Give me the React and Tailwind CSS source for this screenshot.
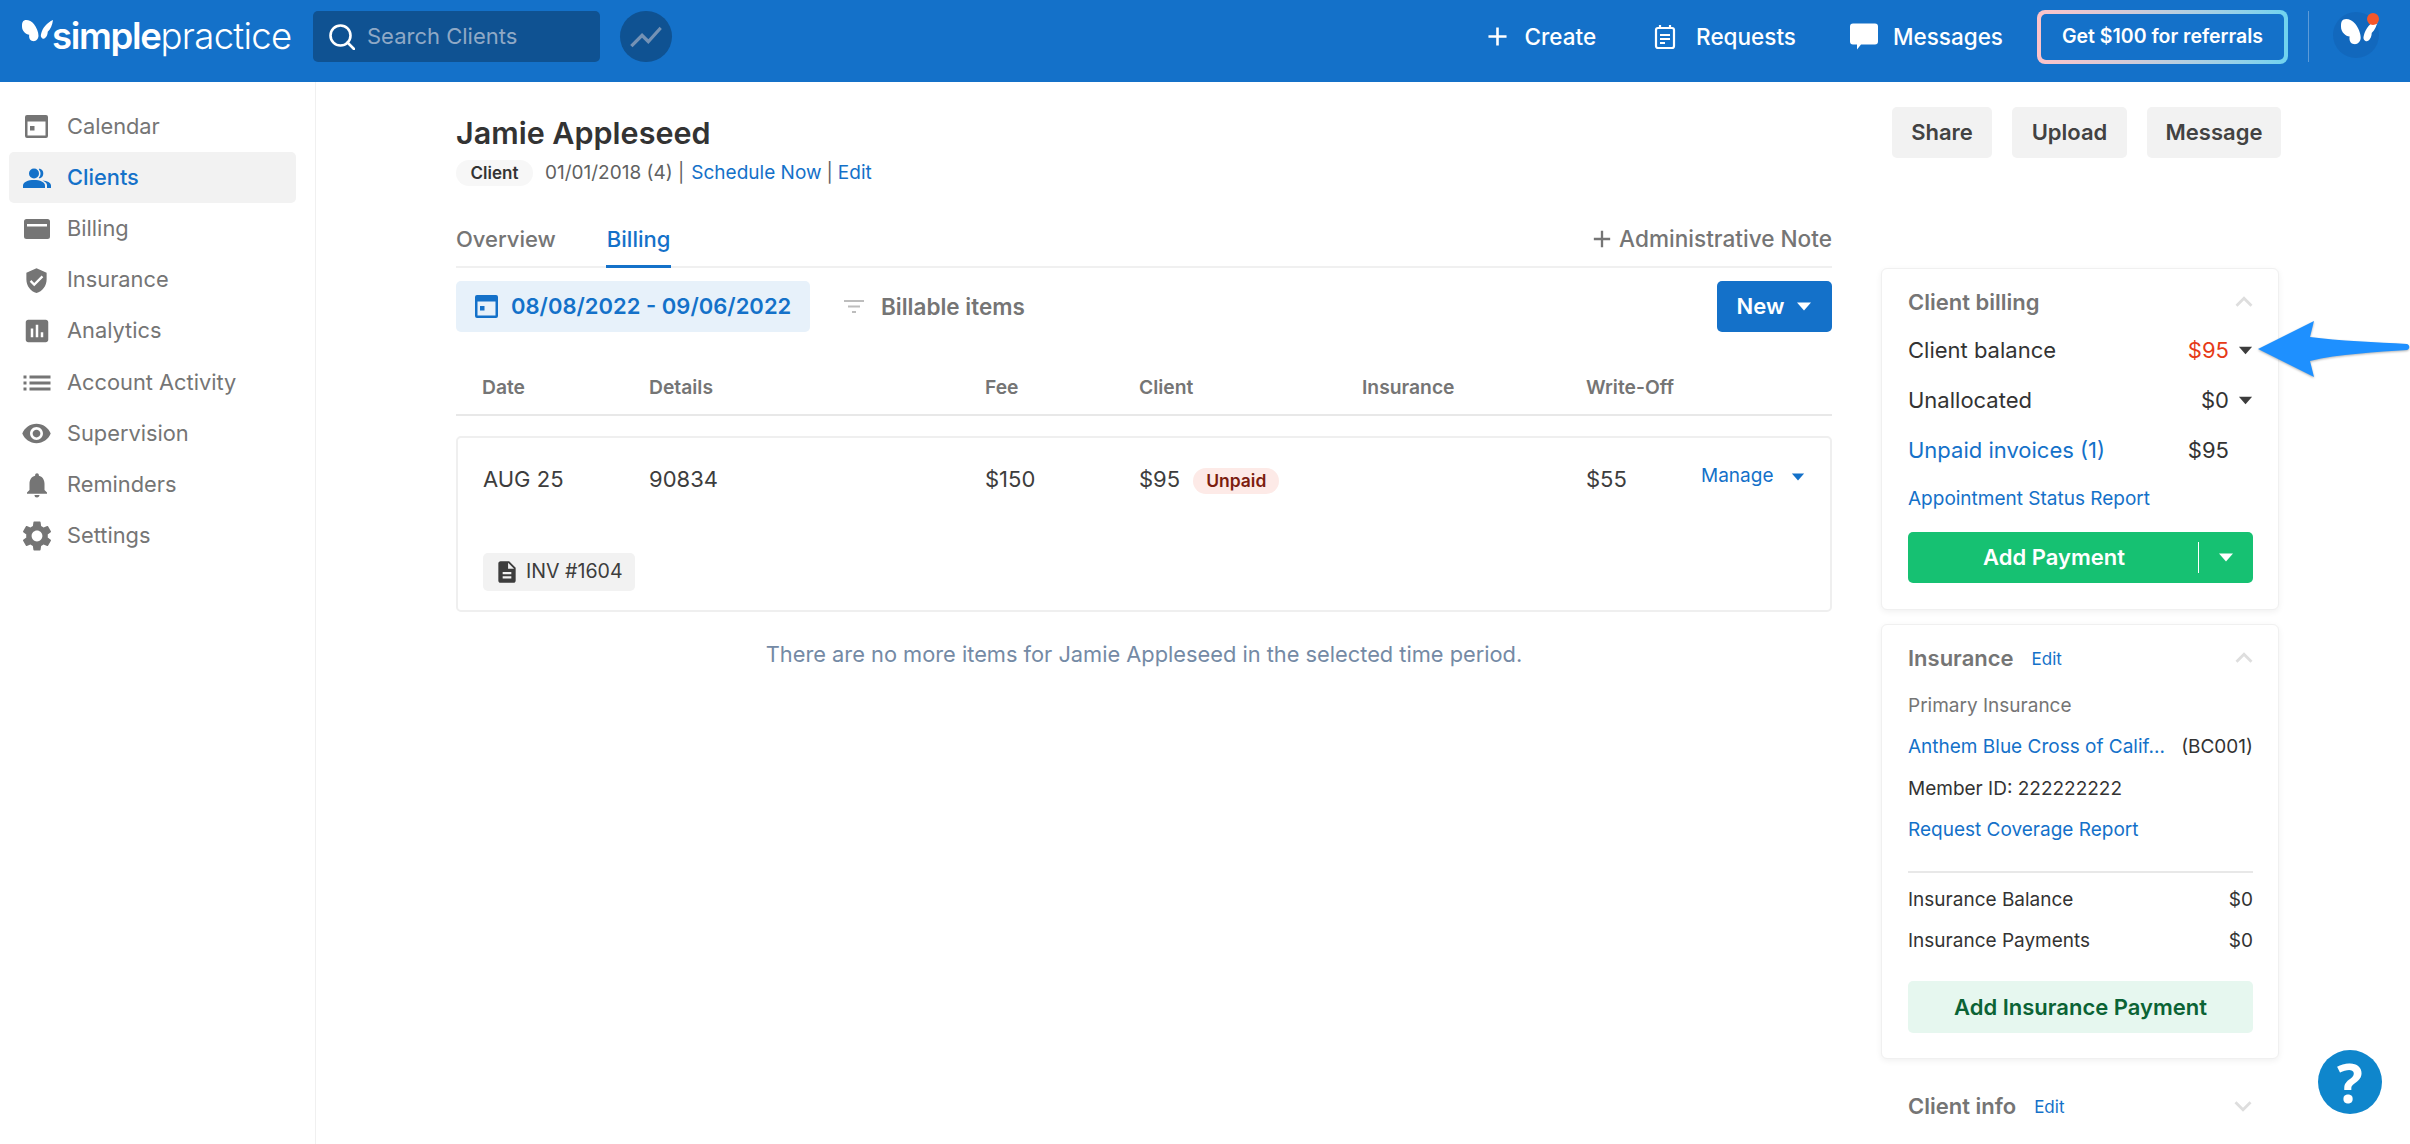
import { MdAdd, MdAssessment, MdDescription, MdExpandLess, MdExpandMore, MdList, MdNotifications, MdSettings, MdShowChart, MdVerifiedUser, MdVisibility } from 'react-icons/md';

const CalendarIcon = ({ className }) => (
    <svg viewBox="0 0 23 23" className={className} fill="currentColor">
        <path fillRule="evenodd" d="M2 0h19a2 2 0 0 1 2 2v19a2 2 0 0 1-2 2H2a2 2 0 0 1-2-2V2a2 2 0 0 1 2-2zm.500 6.500v14h18v-14h-18zM5 11h4.500v4.500H5V11z" />
    </svg>
);

const PeopleIcon = ({ className }) => (
    <svg viewBox="0 0 28 20" className={className} fill="currentColor">
        <circle cx="11" cy="5.500" r="5" />
        <path d="M17 .8a5 5 0 0 1 0 9.400c-.8.300-1.500 0-1-.6a7 7 0 0 0 0-8.200c-.5-.6.200-.9 1-.6z" />
        <path d="M0 20v-2.500C0 14 5 12 11 12s11 2 11 5.500V20H0z" />
        <path d="M19.500 12.500c4.500.4 8.500 2 8.500 5V20h-4v-3c0-1.800-2-3.400-4.500-4.500z" />
    </svg>
);

const CardIcon = ({ className }) => (
    <svg viewBox="0 0 26 20" className={className} fill="currentColor">
        <path fillRule="evenodd" d="M2.500 0h21A2.500 2.500 0 0 1 26 2.500v15a2.500 2.500 0 0 1-2.500 2.500h-21A2.500 2.500 0 0 1 0 17.500v-15A2.500 2.500 0 0 1 2.500 0zM3 5v2.500h20V5H3z" />
    </svg>
);

const RequestsIcon = ({ className }) => (
    <svg viewBox="0 0 22 26" className={className} fill="none" stroke="currentColor" strokeWidth="2.200">
        <rect x="2" y="4" width="18" height="20" rx="2" />
        <path d="M6 1v4M16 1v4" />
        <path d="M6 11h10M6 15h10M6 19h5" />
    </svg>
);

const SearchIcon = ({ className }) => (
    <svg viewBox="0 0 26 26" className={className} fill="none" stroke="currentColor" strokeWidth="2.600" strokeLinecap="round">
        <circle cx="11.500" cy="11.500" r="10" />
        <path d="M18.500 18.500L25 25" />
    </svg>
);

const Butterfly = ({ className }) => (
    <svg viewBox="0 0 94 68" className={className} fill="currentColor">
        <path d="M2 8C8 -2 26 2 36 14C44 24 50 38 50 50C50 60 42 68 32 66C24 65 20 56 22 47C12 46 0 36 0 22C0 16 0 12 2 8Z" />
        <path d="M58 44C62 26 76 10 94 2C92 18 86 30 78 38C78 50 70 62 62 58C57 55 56 50 58 44Z" />
    </svg>
);

const Caret = ({ className }) => (
    <svg viewBox="0 0 16 9" className={className} fill="currentColor">
        <path d="M1 0.500h14L8 8.500z" />
    </svg>
);

const navItems = [
    { label: 'Calendar', icon: <CalendarIcon className="w-[23px] h-[23px]" /> },
    { label: 'Clients', icon: <PeopleIcon className="w-[28px] h-[20px]" />, active: true },
    { label: 'Billing', icon: <CardIcon className="w-[26px] h-[20px]" /> },
    { label: 'Insurance', icon: <MdVerifiedUser className="w-[27px] h-[27px] shrink-0" /> },
    { label: 'Analytics', icon: <MdAssessment className="w-[30px] h-[30px] shrink-0" /> },
    { label: 'Account Activity', icon: <MdList className="w-[36px] h-[36px] shrink-0" /> },
    { label: 'Supervision', icon: <MdVisibility className="w-[31px] h-[31px] shrink-0" /> },
    { label: 'Reminders', icon: <MdNotifications className="w-[30px] h-[30px] shrink-0" /> },
    { label: 'Settings', icon: <MdSettings className="w-[36px] h-[36px] shrink-0" /> },
];

const Sidebar = () => (
    <aside className="w-[316px] shrink-0 border-r border-[#f0f0f0] pt-[19px] pl-[9px] pr-[19px]">
        {navItems.map((item) => (
            <div
                key={item.label}
                className={`h-[51.200px] flex items-center rounded-[5px] ${item.active ? 'bg-[#f2f2f2] text-[#1471c9] font-medium' : 'text-[#757575]'}`}
            >
                <span className="w-[58px] shrink-0 flex justify-center pr-[3px]">{item.icon}</span>
                <span className="text-[21.800px] leading-none">{item.label}</span>
            </div>
        ))}
    </aside>
);

const Header = () => (
    <header className="h-[82px] pb-[9px] bg-[#1471c9] flex items-center text-white">
        <div className="w-[313px] shrink-0 flex items-center pl-[22px]">
            <Butterfly className="w-[31px] h-[23px] -mt-[13px] shrink-0" />
            <span className="text-[36.500px] leading-none font-semibold tracking-[-1.300px] -ml-[1px]">simple</span>
            <span className="text-[36.500px] leading-none font-light tracking-[-0.700px]">practice</span>
        </div>
        <div className="w-[287px] h-[51px] rounded-[5px] bg-[#0f5292] flex items-center pl-[16px]">
            <SearchIcon className="w-[26px] h-[26px] mr-[12px]" />
            <span className="text-[22px] text-[#8fa9c6]">Search Clients</span>
        </div>
        <div className="ml-[20px] w-[52px] h-[51px] rounded-full bg-[#0f5292] flex items-center justify-center">
            <MdShowChart className="w-[38px] h-[38px] text-[#7492b5]" />
        </div>
        <div className="ml-auto flex items-center">
            <MdAdd className="w-[31px] h-[31px] mr-[11px]" />
            <span className="text-[22.500px] font-medium">Create</span>
            <RequestsIcon className="ml-[58px] w-[22px] h-[26px] mr-[20px]" />
            <span className="text-[22.500px] font-medium">Requests</span>
            <svg viewBox="0 0 28 26" className="ml-[54px] w-[28px] h-[27px] mr-[15px]" fill="currentColor">
                <path d="M3 0h22a3 3 0 0 1 3 3v15a3 3 0 0 1-3 3H11l-4 5 0-5H3a3 3 0 0 1-3-3V3a3 3 0 0 1 3-3z" />
            </svg>
            <span className="text-[22.500px] font-medium">Messages</span>
            <div className="ml-[34px] w-[251px] h-[54px] rounded-[8px] bg-linear-to-r from-[#fdc3c9] to-[#6fd3ef] p-[4px]">
                <div className="w-full h-full rounded-[5px] bg-[#1471c9] flex items-center justify-center text-[19.500px] font-semibold">
                    Get $100 for referrals
                </div>
            </div>
            <div className="ml-[20px] w-[1px] h-[51px] bg-[#5d9bd8]" />
            <div className="relative ml-[24px] mr-[31px] w-[46px] h-[50px]">
                <div className="absolute left-0 top-0 w-[46px] h-[46px] rounded-full bg-[#1268bd]" />
                <Butterfly className="absolute left-[8px] top-[6px] w-[37px] h-[27px] text-white" />
                <div className="absolute left-[34px] top-[1px] w-[12px] h-[12px] rounded-full bg-[#f4572a]" />
            </div>
        </div>
    </header>
);

const columns = 'grid grid-cols-[167px_336px_154px_223px_224px_115px_1fr]';

const BillingPanel = () => (
    <div className="w-[1376px] shrink-0">
        <div className="h-[53px] flex items-start border-b-2 border-[#f0f0f0] relative">
            <span className="text-[22px] leading-[48px] text-[#757575] font-medium">Overview</span>
            <span className="ml-[50px] h-[53px] text-[22px] leading-[48px] text-[#1471c9] font-medium border-b-[3px] border-[#1471c9] px-[1px]">Billing</span>
            <span className="ml-auto flex items-center h-[48px] text-[22.600px] font-medium text-[#757575]">
                <MdAdd className="w-[28px] h-[28px] mr-[3px]" />
                Administrative Note
            </span>
        </div>
        <div className="mt-[13px] flex items-center">
            <div className="w-[354px] h-[51px] rounded-[5px] bg-[#e7f1fa] flex items-center pl-[19px] text-[#1471c9]">
                <CalendarIcon className="w-[23px] h-[23px] mr-[13px]" />
                <span className="text-[22px] font-semibold whitespace-nowrap">08/08/2022 - 09/06/2022</span>
            </div>
            <svg viewBox="0 0 20 14" className="ml-[34px] w-[20px] h-[14px] text-[#bdbdbd]" fill="currentColor">
                <path d="M0 0h20v2H0zM4 5.500h12v2H4zM8 11h4v2H8z" />
            </svg>
            <span className="ml-[17px] text-[22.500px] font-semibold text-[#757575]">Billable items</span>
            <div className="ml-auto w-[115px] h-[51px] rounded-[5px] bg-[#1471c9] text-white flex items-center justify-center gap-[12px]">
                <span className="text-[22px] font-semibold">New</span>
                <Caret className="w-[16px] h-[9px]" />
            </div>
        </div>
        <div className={`${columns} px-[26px] mt-[28px] h-[56px] items-center border-b-2 border-[#e8e8e8] text-[19.300px] font-semibold text-[#757575]`}>
            <span>Date</span>
            <span>Details</span>
            <span>Fee</span>
            <span>Client</span>
            <span>Insurance</span>
            <span>Write-Off</span>
        </div>
        <div className="mt-[20px] h-[176px] rounded-[5px] border-2 border-[#efefef]">
            <div className={`${columns} px-[24px] pt-[23px] text-[22px] text-[#3d3d3d] items-center h-[60px]`}>
                <span className="pl-[1px]">AUG 25</span>
                <span>90834</span>
                <span>$150</span>
                <span className="flex items-center">
                    $95
                    <span className="ml-[13px] mt-[3px] h-[26px] px-[13px] rounded-full bg-[#fdeae7] text-[#7c1d0f] text-[17.500px] font-semibold flex items-center">Unpaid</span>
                </span>
                <span />
                <span>$55</span>
                <span className="flex items-center -mt-[6px] text-[#1471c9] text-[19px]">
                    Manage
                    <Caret className="ml-[18px] w-[14px] h-[8px]" />
                </span>
            </div>
            <div className="mt-[55px] ml-[25px] w-[152px] h-[38px] rounded-[5px] bg-[#f2f2f2] flex items-center pl-[11px] text-[#3d3d3d]">
                <MdDescription className="w-[26px] h-[26px] mr-[6px] shrink-0" />
                <span className="text-[19.600px] whitespace-nowrap">INV #1604</span>
            </div>
        </div>
        <p className="mt-[27px] text-center text-[21.800px] leading-[30px] text-[#748aa5]">
            There are no more items for Jamie Appleseed in the selected time period.
        </p>
    </div>
);

const SideCard = ({ children, className }) => (
    <section className={`border border-[#f0f0f0] rounded-[6px] bg-white shadow-[0_2px_6px_rgba(0,0,0,0.06)] pl-[26px] pr-[25px] ${className}`}>{children}</section>
);

const Row = ({ label, value, caret, red, link, height }) => (
    <div className={`${height} flex items-center text-[22px]`}>
        <span className={link ? 'text-[#1471c9]' : 'text-[#333333]'}>{label}</span>
        <span className={`ml-auto ${red ? 'text-[#e63a17]' : 'text-[#333333]'}`}>{value}</span>
        <span className="w-[24px] flex justify-end">{caret && <Caret className="w-[15px] h-[9px] text-[#3d3d3d]" />}</span>
    </div>
);

const SmallRow = ({ children }) => (
    <div className="h-[41.500px] flex items-center justify-between text-[19px] text-[#333333]">{children}</div>
);

const Chevron = ({ up }) => up
    ? <MdExpandLess className="ml-auto w-[34px] h-[34px] -mr-[8px] text-[#dedede] shrink-0" />
    : <MdExpandMore className="ml-auto w-[34px] h-[34px] -mr-[8px] text-[#dedede] shrink-0" />;

const ClientColumn = () => (
    <div className="w-[398px] shrink-0 pt-[53px]">
        <SideCard className="h-[342px] pt-[19px]">
            <div className="h-[28px] flex items-center">
                <span className="text-[22px] font-semibold text-[#757575]">Client billing</span>
                <Chevron up />
            </div>
            <div className="mt-[9px]">
                <Row label="Client balance" value="$95" caret red height="h-[50px]" />
                <Row label="Unallocated" value="$0" caret height="h-[51px]" />
                <Row label="Unpaid invoices (1)" value="$95" link height="h-[49px]" />
            </div>
            <div className="h-[48px] flex items-center text-[19px] text-[#1471c9]">Appointment Status Report</div>
            <div className="mt-[9px] h-[51px] rounded-[5px] bg-[#16c172] flex items-center text-white">
                <span className="flex-1 text-center text-[22px] font-semibold pl-[2px]">Add Payment</span>
                <span className="w-[1px] h-[31px] bg-white" />
                <span className="w-[54px] flex justify-center"><Caret className="w-[16px] h-[9px]" /></span>
            </div>
        </SideCard>
        <SideCard className="mt-[14px] h-[435px] pt-[19px]">
            <div className="h-[28px] flex items-center">
                <span className="text-[22px] font-semibold text-[#757575]">Insurance</span>
                <span className="ml-[18px] mt-[3px] text-[17px] text-[#1471c9]">Edit</span>
                <Chevron up />
            </div>
            <div className="mt-[13px]">
                <div className="h-[41.500px] flex items-center text-[19px] text-[#757575]">Primary Insurance</div>
                <SmallRow>
                    <span className="text-[#1471c9]">Anthem Blue Cross of Calif...</span>
                    <span>(BC001)</span>
                </SmallRow>
                <SmallRow>Member ID: 222222222</SmallRow>
                <div className="h-[41.500px] flex items-center text-[19px] text-[#1471c9]">Request Coverage Report</div>
            </div>
            <div className="mt-[20px] h-[2px] bg-[#e8e8e8]" />
            <div className="mt-[6px]">
                <SmallRow><span>Insurance Balance</span><span>$0</span></SmallRow>
                <SmallRow><span>Insurance Payments</span><span>$0</span></SmallRow>
            </div>
            <div className="mt-[19px] h-[52px] rounded-[5px] bg-[#e6f7ef] flex items-center justify-center text-[22px] font-semibold text-[#0b6335]">
                Add Insurance Payment
            </div>
        </SideCard>
        <div className="mt-[33px] px-[27px] h-[28px] flex items-center">
            <span className="text-[22px] font-semibold text-[#757575]">Client info</span>
            <span className="ml-[18px] mt-[3px] text-[17px] text-[#1471c9]">Edit</span>
            <Chevron />
        </div>
    </div>
);

const App = () => (
    <div className="relative h-[1144px] w-[2410px] overflow-hidden bg-white font-[family-name:Inter,sans-serif]">
        <Header />
        <div className="flex h-[1062px]">
            <Sidebar />
            <main className="pl-[140px] w-[1965px] shrink-0">
                <div className="h-[133px] pt-[25px] flex justify-between">
                    <div>
                        <h1 className="mt-[5px] text-[30.500px] leading-[42px] font-semibold text-[#333333]">Jamie Appleseed</h1>
                        <div className="mt-[5px] flex items-center text-[19px] text-[#616161]">
                            <span className="h-[26px] w-[77px] rounded-full bg-[#f7f7f7] flex items-center justify-center text-[17px] font-semibold text-[#333333]">Client</span>
                            <span className="ml-[12px]">01/01/2018 (4) | </span>
                            <span className="ml-[7px] text-[#1471c9]">Schedule Now</span>
                            <span className="ml-[5px]">|</span>
                            <span className="ml-[5px] text-[#1471c9]">Edit</span>
                        </div>
                    </div>
                    <div className="flex gap-[20px] text-[22px] font-semibold text-[#424242]">
                        <span className="w-[100px] h-[51px] rounded-[5px] bg-[#f2f2f2] flex items-center justify-center">Share</span>
                        <span className="w-[115px] h-[51px] rounded-[5px] bg-[#f2f2f2] flex items-center justify-center">Upload</span>
                        <span className="w-[134px] h-[51px] rounded-[5px] bg-[#f2f2f2] flex items-center justify-center">Message</span>
                    </div>
                </div>
                <div className="flex gap-[49px]">
                    <BillingPanel />
                    <ClientColumn />
                </div>
            </main>
        </div>
        <svg viewBox="0 0 152 58" className="absolute left-[2258px] top-[320px] w-[152px] h-[58px] drop-shadow-[0_1px_1px_rgba(0,0,0,0.3)]" fill="#1e90ff">
            <path d="M0 29L56 1L52 17C80 21 120 22 149 24C152 25 152 29 149 30C120 32 80 34 52 41L56 57z" />
        </svg>
        <div className="absolute left-[2318px] top-[1050px] w-[64px] h-[64px] rounded-full bg-[#0f86cc] flex items-center justify-center text-white text-[54px] leading-none font-bold font-[family-name:'Open_Sans',sans-serif]">?</div>
    </div>
);

export default App;
